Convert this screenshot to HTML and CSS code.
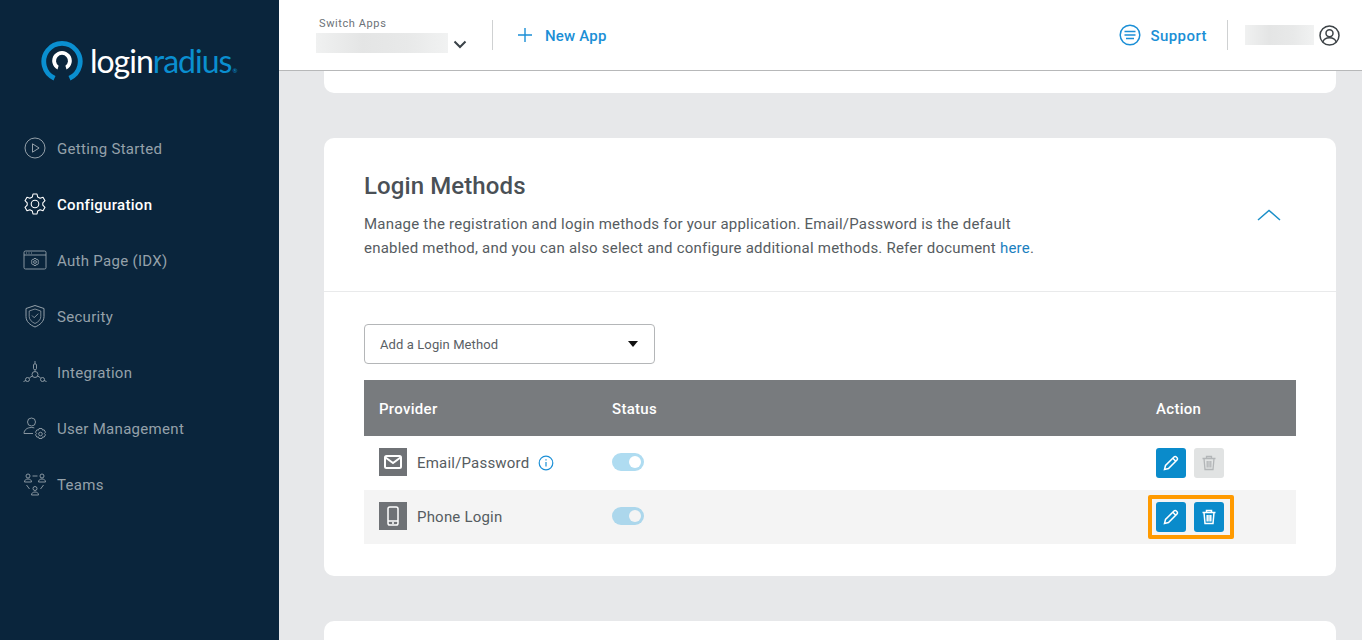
FILE: index.html
```html
<!DOCTYPE html>
<html lang="en">
<head>
<meta charset="utf-8">
<title>Login Methods</title>
<link rel="stylesheet" href="styles.css">
</head>
<body>
<div class="app">
  <aside class="sidebar">
    <div class="logo">
      <svg class="logo-mark" width="42" height="42" viewBox="0 0 42 42" fill="none">
        <path d="M13.500 38.200A18.200 18.200 0 1 1 28.500 38.200" stroke="#0a8fd0" stroke-width="4.800"/>
        <path d="M16.500 29.500A9.800 9.800 0 1 1 25.500 29.500L24.400 25.800A6 6 0 1 0 17.600 25.800Z" fill="#fff"/>
      </svg>
      <span class="logo-text"><span class="logo-white">login</span><span class="logo-blue">radius</span><span class="logo-reg">®</span></span>
    </div>
    <nav class="nav">
      <a class="nav-item">
        <svg class="nav-icon" viewBox="0 0 24 24" fill="none" stroke="currentColor"><circle cx="12" cy="12" r="10"/><path d="M9.500 7.800v8.400l6.600-4.200z"/></svg>
        <span class="nav-label">Getting Started</span>
      </a>
      <a class="nav-item active">
        <svg class="nav-icon" viewBox="0 0 24 24" fill="none" stroke="currentColor" stroke-width="1.100"><path d="M10 2h4l.7 3 2.400 1.200 2.900-1 2 3.500-2.200 2.100v2.400l2.200 2.100-2 3.500-2.900-1-2.400 1.200-.7 3h-4l-.7-3-2.400-1.200-2.900 1-2-3.500 2.200-2.100v-2.400L2 8.700l2-3.500 2.900 1 2.400-1.200z" stroke-linejoin="round"/><circle cx="12" cy="12" r="3.800"/></svg>
        <span class="nav-label">Configuration</span>
      </a>
      <a class="nav-item">
        <svg class="nav-icon" viewBox="0 0 24 24" fill="none" stroke="currentColor" stroke-width=".9"><rect x="1" y="3" width="22" height="18" rx="1.500"/><path d="M1 7h22M3 5h1M5.500 5h1M8 5h1"/><circle cx="12" cy="14" r="1.400"/><path d="M11 10.500h2l.4 1.100 1.200-.2 1 1.700-.8.900.8.900-1 1.700-1.200-.2-.4 1.100h-2l-.4-1.100-1.200.2-1-1.700.8-.9-.8-.9 1-1.700 1.200.2z"/></svg>
        <span class="nav-label">Auth Page (IDX)</span>
      </a>
      <a class="nav-item">
        <svg class="nav-icon" viewBox="0 0 24 24" fill="none" stroke="currentColor"><path d="M12 1.500l9 3v8c0 5-4 8.500-9 10.500-5-2-9-5.500-9-10.500v-8z"/><path d="M12 5l5.800 2v5.500c0 3.200-2.500 5.500-5.800 7-3.300-1.500-5.800-3.800-5.800-7V7z" stroke-width=".8"/><path d="M9 11.500l2.200 2.200 4-4" stroke-width=".9"/></svg>
        <span class="nav-label">Security</span>
      </a>
      <a class="nav-item">
        <svg class="nav-icon" viewBox="0 0 24 24" fill="none" stroke="currentColor" stroke-width=".9"><circle cx="12" cy="14.500" r="3"/><rect x="10.500" y="4" width="3" height="5.500" rx="1"/><path d="M12 1v3M12 9.500v2M9.400 16l-3 1.800M14.600 16l3 1.800"/><circle cx="4.500" cy="19.500" r="2"/><circle cx="19.500" cy="19.500" r="2"/><path d="M.5 21.500l2.500-1M23.500 21.500l-2.500-1"/></svg>
        <span class="nav-label">Integration</span>
      </a>
      <a class="nav-item">
        <svg class="nav-icon" viewBox="0 0 24 24" fill="none" stroke="currentColor" stroke-width=".9"><circle cx="8.500" cy="6" r="4"/><path d="M1 17.500c0-3.500 3-6 7.500-6 1 0 2 .1 2.800.4M1 17.500h9"/><circle cx="17.500" cy="18" r="1.800"/><path d="M16 12.500h3l.5 1.600 1.600-.3 1.400 2.400-1.100 1.300 1.100 1.300-1.400 2.400-1.600-.3-.5 1.600h-3l-.5-1.600-1.600.3-1.400-2.400 1.100-1.300-1.100-1.300 1.400-2.400 1.600.3z"/></svg>
        <span class="nav-label">User Management</span>
      </a>
      <a class="nav-item">
        <svg class="nav-icon" viewBox="0 0 24 24" fill="none" stroke="currentColor" stroke-width=".9"><circle cx="5" cy="4" r="2"/><path d="M1.500 10c0-2 1.500-3 3.500-3s3.500 1 3.500 3z"/><circle cx="19" cy="4" r="2"/><path d="M15.500 10c0-2 1.500-3 3.500-3s3.500 1 3.500 3z"/><circle cx="12" cy="16.500" r="2"/><path d="M8.500 23c0-2 1.500-3 3.500-3s3.500 1 3.500 3z"/><path d="M9.500 4h5M3.500 13l3 4M20.500 13l-3 4"/></svg>
        <span class="nav-label">Teams</span>
      </a>
    </nav>
  </aside>

  <div class="content">
    <header class="topbar">
      <div class="switcher">
        <span class="switch-label">Switch Apps</span>
        <div class="switch-row">
          <span class="blur-box app-name"></span>
          <svg class="chevron" width="14" height="9" viewBox="0 0 14 9" fill="none" stroke="#3a4248" stroke-width="2"><path d="M1.500 1.500L7 7l5.500-5.500"/></svg>
        </div>
      </div>
      <span class="vline"></span>
      <a class="top-link new-app">
        <svg width="14" height="14" viewBox="0 0 14 14" stroke="#1b8fd6" stroke-width="1.400"><path d="M7 0v14M0 7h14"/></svg>
        <span class="link-label">New App</span>
      </a>
      <div class="top-right">
        <a class="top-link support">
          <svg width="22" height="22" viewBox="0 0 22 22" fill="none" stroke="#1b8fd6" stroke-width="1.500"><circle cx="11" cy="11" r="9.800"/><path d="M5.500 7.500h11M5.500 11h11M7 14.500h8"/></svg>
          <span class="link-label">Support</span>
        </a>
        <span class="vline"></span>
        <div class="user">
          <span class="blur-box user-name"></span>
          <svg width="21" height="21" viewBox="0 0 21 21" fill="none" stroke="#3d4347" stroke-width="1.500"><circle cx="10.500" cy="10.500" r="9.500"/><circle cx="10.500" cy="8.300" r="3.500"/><path d="M3.800 17c1-3 3.500-4.200 6.700-4.200s5.700 1.200 6.700 4.200"/></svg>
        </div>
      </div>
    </header>

    <main class="main">
      <section class="card card-top"></section>

      <section class="card">
        <div class="card-head">
          <div class="head-text">
            <h2 class="title">Login Methods</h2>
            <p class="desc">Manage the registration and login methods for your application. Email/Password is the default enabled method, and you can also select and configure additional methods. Refer document <a class="doc-link">here</a>.</p>
          </div>
          <svg class="collapse" width="24" height="12" viewBox="0 0 24 12" fill="none" stroke="#1b8fc9" stroke-width="1.500"><path d="M1 11L12 1.500 23 11"/></svg>
        </div>
        <div class="card-body">
          <div class="select">
            <span>Add a Login Method</span>
            <span class="caret"></span>
          </div>
          <div class="table">
            <div class="row row-head">
              <span class="col-provider">Provider</span>
              <span class="col-status">Status</span>
              <span class="col-action">Action</span>
            </div>
            <div class="row">
              <div class="col-provider provider">
                <span class="provider-icon">
                  <svg width="18" height="14" viewBox="0 0 18 14" fill="none" stroke="#fff" stroke-width="2"><rect x="1" y="1" width="16" height="12" rx="1.500"/><path d="M1.500 2.500L9 8l7.500-5.500"/></svg>
                </span>
                <span>Email/Password</span>
                <svg class="info" width="16" height="16" viewBox="0 0 16 16" fill="none" stroke="#1b8fd6" stroke-width="1.200"><circle cx="8" cy="8" r="6.800"/><path d="M8 7v4.500M8 4.200v1.300"/></svg>
              </div>
              <div class="col-status"><span class="toggle"></span></div>
              <div class="col-action actions">
                <button class="btn">
                  <svg width="16" height="16" viewBox="0 0 16 16" fill="none" stroke="#fff" stroke-width="1.500"><path d="M1.500 14.500l1-4L11 2a1.600 1.600 0 0 1 2.300 0l.7.700a1.600 1.600 0 0 1 0 2.300l-8.500 8.500z"/><path d="M9.800 3.200l3 3"/></svg>
                </button>
                <button class="btn btn-disabled">
                  <svg width="16" height="16" viewBox="0 0 16 16" fill="none" stroke="#b3b6b8" stroke-width="1.300"><path d="M1.500 3.500h13M5.500 3.500V1.500h5v2M3 3.500l1 11h8l1-11M6.200 6v6.500M8 6v6.500M9.800 6v6.500"/></svg>
                </button>
              </div>
            </div>
            <div class="row row-alt">
              <div class="col-provider provider">
                <span class="provider-icon">
                  <svg width="12" height="20" viewBox="0 0 12 20" fill="none" stroke="#fff" stroke-width="1.500"><rect x="1" y="1" width="10" height="18" rx="1.800"/><path d="M1 15h10M5 17h2"/></svg>
                </span>
                <span>Phone Login</span>
              </div>
              <div class="col-status"><span class="toggle"></span></div>
              <div class="col-action actions">
                <span class="highlight"></span>
                <button class="btn">
                  <svg width="16" height="16" viewBox="0 0 16 16" fill="none" stroke="#fff" stroke-width="1.500"><path d="M1.500 14.500l1-4L11 2a1.600 1.600 0 0 1 2.300 0l.7.700a1.600 1.600 0 0 1 0 2.300l-8.500 8.500z"/><path d="M9.800 3.200l3 3"/></svg>
                </button>
                <button class="btn">
                  <svg width="16" height="16" viewBox="0 0 16 16" fill="none" stroke="#fff" stroke-width="1.500"><path d="M1.500 3.500h13M5.500 3.500V1.500h5v2M3 3.500l1 11h8l1-11M6.200 6v6.500M8 6v6.500M9.800 6v6.500"/></svg>
                </button>
              </div>
            </div>
          </div>
        </div>
      </section>

      <section class="card card-bottom"></section>
    </main>
  </div>
</div>
</body>
</html>
```

FILE: styles.css
```css
* { box-sizing: border-box; }
html, body { margin: 0; height: 100%; overflow: hidden; }
body { font-family: Roboto, "Liberation Sans", sans-serif; color: #4c5257; }
a { text-decoration: none; }

.app { display: flex; height: 640px; }

.sidebar { width: 279px; flex: none; background: #0a253c; }
.logo { height: 120px; padding: 40px 0 0 41px; display: flex; align-items: flex-start; gap: 7px; }
.logo-mark { flex: none; }
.logo-text { font-family: Lato, sans-serif; font-weight: 400; font-size: 32px; line-height: 42px; letter-spacing: -1px; }
.logo-white { color: #fff; }
.logo-blue { color: #0a8fd0; }
.logo-reg { color: #0a8fd0; font-size: 6px; letter-spacing: 0; margin-left: 1px; }

.nav { display: flex; flex-direction: column; }
.nav-item { height: 56px; display: flex; align-items: center; gap: 10px; padding-left: 23px; color: #95a1aa; font-size: 15px; letter-spacing: .3px; }
.nav-item.active { color: #fff; font-weight: 500; }
.nav-icon { width: 24px; height: 24px; flex: none; }
.nav-label { padding-top: 2px; }

.content { flex: 1; min-width: 0; display: flex; flex-direction: column; }

.topbar { height: 71px; flex: none; background: #fff; border-bottom: 1px solid #b7b8b9; display: flex; align-items: center; padding: 0 22px 0 37px; }
.switcher { width: 152px; display: flex; flex-direction: column; gap: 2px; }
.switch-label { font-size: 11px; line-height: 14px; letter-spacing: .6px; color: #6c7278; padding-left: 3px; }
.switch-row { display: flex; align-items: center; gap: 5px; }
.blur-box { display: block; background: linear-gradient(90deg, #f0f1f1, #e4e5e5 35%, #e8e9e9 70%, #f1f2f2); }
.app-name { width: 132px; height: 20px; }
.chevron { margin-top: 3px; }
.vline { width: 1px; height: 30px; background: #cfd1d2; flex: none; margin-bottom: 1px; }
.switcher + .vline { margin-left: 24px; }
.top-link { display: flex; align-items: center; color: #1b8fd6; font-size: 15px; font-weight: 500; letter-spacing: .2px; }
.link-label { padding-top: 2px; }
.new-app { margin-left: 25px; gap: 13px; }
.top-right { margin-left: auto; display: flex; align-items: center; }
.support { gap: 9px; margin-right: 20px; letter-spacing: .45px; }
.user { display: flex; align-items: center; gap: 5px; margin-left: 17px; }
.user-name { width: 69px; height: 20px; }

.main { flex: 1; min-height: 0; overflow: hidden; background: #e7e8ea; padding: 0 26px 0 45px; display: flex; flex-direction: column; gap: 45px; }
.card { background: #fff; border-radius: 10px; flex: none; }
.card-top { height: 22px; border-radius: 0 0 10px 10px; }
.card-bottom { height: 40px; border-radius: 10px 10px 0 0; }

.card-head { height: 154px; border-bottom: 1px solid #e9eaeb; padding: 33px 55px 0 40px; display: flex; justify-content: space-between; align-items: flex-start; }
.head-text { width: 690px; }
.title { margin: 0; font-size: 24px; font-weight: 500; line-height: 30px; color: #4a5056; letter-spacing: .1px; }
.desc { margin: 11px 0 0; font-size: 15px; line-height: 24px; color: #565c61; letter-spacing: .22px; }
.doc-link { color: #1b80c0; }
.collapse { margin-top: 38px; }

.card-body { padding: 32px 40px; }
.select { width: 291px; height: 40px; border: 1px solid #b4b6b8; border-radius: 4px; display: flex; align-items: center; justify-content: space-between; padding: 0 16px 0 15px; font-size: 13px; letter-spacing: .1px; color: #5a6065; }
.caret { width: 0; height: 0; border: 5.500px solid transparent; border-top: 6px solid #111; border-bottom: 0; }

.table { margin-top: 16px; }
.row { height: 54px; display: flex; align-items: center; padding-left: 15px; font-size: 15px; color: #565c61; letter-spacing: .2px; }
.row-head { height: 56px; background: #787b7e; color: #fff; font-weight: 500; letter-spacing: .3px; padding-top: 2px; }
.row-alt { background: #f4f4f4; }
.col-provider { width: 233px; flex: none; }
.col-status { width: 544px; flex: none; }
.col-action { flex: 1; }
.provider { display: flex; align-items: center; gap: 10px; }
.provider-icon { width: 28px; height: 28px; margin-top: -2px; background: #6f7276; display: flex; align-items: center; justify-content: center; flex: none; }
.info { margin-left: -1px; margin-top: -1px; }
.toggle { display: block; position: relative; width: 32px; height: 18px; margin-top: -2px; border-radius: 9px; background: #afdcf1; }
.row-alt .toggle { background: #acd7ec; }
.toggle::after { content: ""; position: absolute; right: 3px; top: 3px; width: 12px; height: 12px; border-radius: 50%; background: #fff; }
.row-alt .toggle::after { background: #f4f4f4; }
.actions { display: flex; align-items: center; gap: 8px; position: relative; }
.btn { width: 30px; height: 30px; border: 0; border-radius: 3px; padding: 0; background: #0a8bcb; display: flex; align-items: center; justify-content: center; }
.btn-disabled { background: #e1e3e3; }
.highlight { position: absolute; left: -8px; top: -7px; width: 86px; height: 44px; border: 4px solid #ff9a00; border-radius: 2px; pointer-events: none; }
```
